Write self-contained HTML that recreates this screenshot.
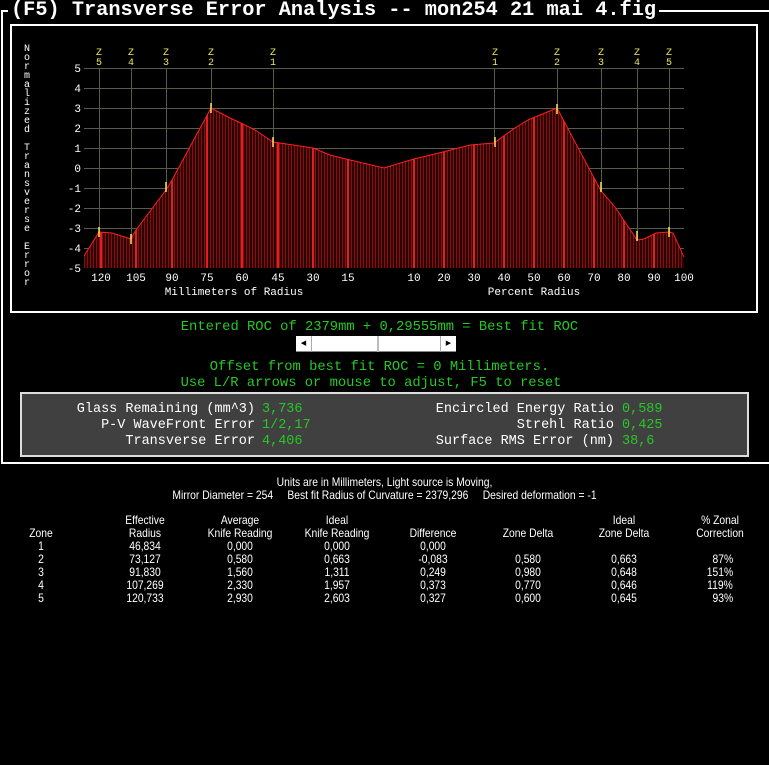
<!DOCTYPE html>
<html><head><meta charset="utf-8"><style>
body{margin:0;background:#000;width:769px;height:765px;overflow:hidden;position:relative;font-family:"Liberation Mono",monospace}
.a{position:absolute;white-space:pre}
.g{color:#25c825;font-size:13.8px}
.t{font-family:"Liberation Sans",sans-serif;font-size:12px;color:#fff;transform:scaleX(0.86);transform-origin:center}
.pl{color:#fff;font-size:13.5px}
.pv{color:#25c825;font-size:13.5px}
</style></head><body>
<div class="a" style="left:1px;top:10px;width:766px;height:452px;border:2px solid #fff;border-top:none"></div>
<div class="a" style="left:1px;top:10px;width:768px;height:2px;background:#fff"></div>
<div class="a" style="left:8px;top:0;background:#000;color:#fff;font-weight:bold;font-size:20.3px;line-height:22px;padding:0 3px">(F5) Transverse Error Analysis -- mon254 21 mai 4.fig</div>
<div class="a" style="left:10px;top:24px;width:744px;height:285px;border:2px solid #fff"></div>
<svg class="a" style="left:0;top:0" width="769" height="320" font-family="Liberation Mono, monospace">
<defs>
<pattern id="p" x="84" y="0" width="3" height="10" patternUnits="userSpaceOnUse">
<rect width="3" height="10" fill="#2a0000"/><rect width="1" height="10" fill="#8a0c0c"/></pattern>
<clipPath id="c"><path d="M84,256 L99,232 L112,233 L131,239 L136,230 L166,190 L172,180 L211,108 L230,118 L245,125 L255,130 L273,142 L300,146 L313,148 L330,155 L350,160 L384,168 L414,159 L443,152 L470,145 L494,143 L505,135 L515,128 L528,120 L540,115 L557,108 L601,191 L615,207 L637,240 L644,239 L656,233 L669,232 L673,233 L684,257 L684,268 L84,268 Z"/></clipPath>
</defs>
<g stroke="#5a5a48" stroke-width="1">
<line x1="84" y1="68.5" x2="684" y2="68.5"/><line x1="84" y1="88.5" x2="684" y2="88.5"/><line x1="84" y1="108.5" x2="684" y2="108.5"/><line x1="84" y1="128.5" x2="684" y2="128.5"/><line x1="84" y1="148.5" x2="684" y2="148.5"/><line x1="84" y1="168.5" x2="684" y2="168.5"/><line x1="84" y1="188.5" x2="684" y2="188.5"/><line x1="84" y1="208.5" x2="684" y2="208.5"/><line x1="84" y1="228.5" x2="684" y2="228.5"/><line x1="84" y1="248.5" x2="684" y2="248.5"/>
<line x1="99.5" y1="68" x2="99.5" y2="268"/><line x1="131.5" y1="68" x2="131.5" y2="268"/><line x1="166.5" y1="68" x2="166.5" y2="268"/><line x1="211.5" y1="68" x2="211.5" y2="268"/><line x1="273.5" y1="68" x2="273.5" y2="268"/>
<line x1="494.5" y1="68" x2="494.5" y2="268"/><line x1="557.5" y1="68" x2="557.5" y2="268"/><line x1="601.5" y1="68" x2="601.5" y2="268"/><line x1="637.5" y1="68" x2="637.5" y2="268"/><line x1="669.5" y1="68" x2="669.5" y2="268"/>
</g>
<g clip-path="url(#c)">
<rect x="84" y="60" width="600" height="208" fill="url(#p)"/>
<g stroke="#e02020" stroke-width="2">
<line x1="101" y1="60" x2="101" y2="268"/><line x1="136" y1="60" x2="136" y2="268"/><line x1="172" y1="60" x2="172" y2="268"/><line x1="207" y1="60" x2="207" y2="268"/><line x1="242" y1="60" x2="242" y2="268"/><line x1="278" y1="60" x2="278" y2="268"/><line x1="313" y1="60" x2="313" y2="268"/><line x1="348" y1="60" x2="348" y2="268"/>
<line x1="414" y1="60" x2="414" y2="268"/><line x1="444" y1="60" x2="444" y2="268"/><line x1="474" y1="60" x2="474" y2="268"/><line x1="504" y1="60" x2="504" y2="268"/><line x1="534" y1="60" x2="534" y2="268"/><line x1="564" y1="60" x2="564" y2="268"/><line x1="594" y1="60" x2="594" y2="268"/><line x1="624" y1="60" x2="624" y2="268"/><line x1="654" y1="60" x2="654" y2="268"/>
</g></g>
<path d="M84,256 L99,232 L112,233 L131,239 L136,230 L166,190 L172,180 L211,108 L230,118 L245,125 L255,130 L273,142 L300,146 L313,148 L330,155 L350,160 L384,168 L414,159 L443,152 L470,145 L494,143 L505,135 L515,128 L528,120 L540,115 L557,108 L601,191 L615,207 L637,240 L644,239 L656,233 L669,232 L673,233 L684,257" fill="none" stroke="#ff2020" stroke-width="1"/>
<g stroke="#ffe060" stroke-width="1.5">
<line x1="99" y1="227" x2="99" y2="237"/><line x1="131" y1="234" x2="131" y2="244"/><line x1="166" y1="182" x2="166" y2="192"/><line x1="211" y1="103" x2="211" y2="113"/><line x1="273" y1="137" x2="273" y2="147"/>
<line x1="495" y1="137" x2="495" y2="147"/><line x1="557" y1="104" x2="557" y2="114"/><line x1="601" y1="182" x2="601" y2="192"/><line x1="637" y1="231" x2="637" y2="241"/><line x1="669" y1="227" x2="669" y2="237"/>
</g>
<g fill="#e8e860" font-size="10" text-anchor="middle">
<text x="99" y="55">Z</text><text x="99" y="65">5</text><text x="131" y="55">Z</text><text x="131" y="65">4</text><text x="166" y="55">Z</text><text x="166" y="65">3</text><text x="211" y="55">Z</text><text x="211" y="65">2</text><text x="273" y="55">Z</text><text x="273" y="65">1</text>
<text x="495" y="55">Z</text><text x="495" y="65">1</text><text x="557" y="55">Z</text><text x="557" y="65">2</text><text x="601" y="55">Z</text><text x="601" y="65">3</text><text x="637" y="55">Z</text><text x="637" y="65">4</text><text x="669" y="55">Z</text><text x="669" y="65">5</text>
</g>
<g fill="#fff" font-size="11" text-anchor="end">
<text x="81" y="72">5</text><text x="81" y="92">4</text><text x="81" y="112">3</text><text x="81" y="132">2</text><text x="81" y="152">1</text><text x="81" y="172">0</text><text x="81" y="192">-1</text><text x="81" y="212">-2</text><text x="81" y="232">-3</text><text x="81" y="252">-4</text><text x="81" y="272">-5</text>
</g>
<g fill="#fff" font-size="11" text-anchor="middle">
<text x="101" y="281">120</text><text x="136" y="281">105</text><text x="172" y="281">90</text><text x="207" y="281">75</text><text x="242" y="281">60</text><text x="278" y="281">45</text><text x="313" y="281">30</text><text x="348" y="281">15</text>
<text x="414" y="281">10</text><text x="444" y="281">20</text><text x="474" y="281">30</text><text x="504" y="281">40</text><text x="534" y="281">50</text><text x="564" y="281">60</text><text x="594" y="281">70</text><text x="624" y="281">80</text><text x="654" y="281">90</text><text x="684" y="281">100</text>
<text x="234" y="295">Millimeters of Radius</text><text x="534" y="295">Percent Radius</text>
</g>
<g fill="#fff" font-size="10" text-anchor="middle">
<text x="27" y="51">N</text><text x="27" y="60">o</text><text x="27" y="69">r</text><text x="27" y="78">m</text><text x="27" y="87">a</text><text x="27" y="96">l</text><text x="27" y="105">i</text><text x="27" y="114">z</text><text x="27" y="123">e</text><text x="27" y="132">d</text>
<text x="27" y="150">T</text><text x="27" y="159">r</text><text x="27" y="168">a</text><text x="27" y="177">n</text><text x="27" y="186">s</text><text x="27" y="195">v</text><text x="27" y="204">e</text><text x="27" y="213">r</text><text x="27" y="222">s</text><text x="27" y="231">e</text>
<text x="27" y="249">E</text><text x="27" y="258">r</text><text x="27" y="267">r</text><text x="27" y="276">o</text><text x="27" y="285">r</text>
</g>
</svg>
<div class="a g" style="left:0;width:759px;text-align:center;top:320px">Entered ROC of 2379mm + 0,29555mm = Best fit ROC</div>
<div class="a" style="left:296px;top:336px;width:160px;height:16px;background:#fff;border-bottom:1px solid #888;box-sizing:border-box"></div>
<div class="a" style="left:296px;top:336px;width:16px;height:16px;border-right:1px solid #aaa;box-sizing:border-box;font-size:7px;line-height:16px;text-align:center;color:#000">◀</div>
<div class="a" style="left:440px;top:336px;width:16px;height:16px;border-left:1px solid #aaa;box-sizing:border-box;font-size:7px;line-height:16px;text-align:center;color:#000">▶</div>
<div class="a" style="left:377px;top:336px;width:2px;height:16px;background:#bbb"></div>
<div class="a g" style="left:0;width:759px;text-align:center;top:360px">Offset from best fit ROC = 0 Millimeters.</div>
<div class="a g" style="left:0;width:742px;text-align:center;top:376px">Use L/R arrows or mouse to adjust, F5 to reset</div>
<div class="a" style="left:20px;top:392px;width:725px;height:61px;background:#404040;border:2px solid #ddd"></div>
<div class="a pl" style="right:514px;top:402px">Glass Remaining (mm^3)</div><div class="a pv" style="left:262px;top:402px">3,736</div>
<div class="a pl" style="right:514px;top:418px">P-V WaveFront Error</div><div class="a pv" style="left:262px;top:418px">1/2,17</div>
<div class="a pl" style="right:514px;top:434px">Transverse Error</div><div class="a pv" style="left:262px;top:434px">4,406</div>
<div class="a pl" style="right:155px;top:402px">Encircled Energy Ratio</div><div class="a pv" style="left:622px;top:402px">0,589</div>
<div class="a pl" style="right:155px;top:418px">Strehl Ratio</div><div class="a pv" style="left:622px;top:418px">0,425</div>
<div class="a pl" style="right:155px;top:434px">Surface RMS Error (nm)</div><div class="a pv" style="left:622px;top:434px">38,6</div>

<div class="a t" style="left:0;width:769px;text-align:center;top:475px">Units are in Millimeters, Light source is Moving,</div>
<div class="a t" style="left:0;width:769px;text-align:center;top:488px">Mirror Diameter = 254     Best fit Radius of Curvature = 2379,296     Desired deformation = -1</div>
<div class="a t" style="left:0;top:514px;width:82px;text-align:center;line-height:13px"><br>Zone<br>1<br>2<br>3<br>4<br>5</div>
<div class="a t" style="left:100px;top:514px;width:90px;text-align:center;line-height:13px">Effective<br>Radius<br>46,834<br>73,127<br>91,830<br>107,269<br>120,733</div>
<div class="a t" style="left:190px;top:514px;width:100px;text-align:center;line-height:13px">Average<br>Knife Reading<br>0,000<br>0,580<br>1,560<br>2,330<br>2,930</div>
<div class="a t" style="left:287px;top:514px;width:100px;text-align:center;line-height:13px">Ideal<br>Knife Reading<br>0,000<br>0,663<br>1,311<br>1,957<br>2,603</div>
<div class="a t" style="left:383px;top:514px;width:100px;text-align:center;line-height:13px"><br>Difference<br>0,000<br>-0,083<br>0,249<br>0,373<br>0,327</div>
<div class="a t" style="left:478px;top:514px;width:100px;text-align:center;line-height:13px"><br>Zone Delta<br><br>0,580<br>0,980<br>0,770<br>0,600</div>
<div class="a t" style="left:574px;top:514px;width:100px;text-align:center;line-height:13px">Ideal<br>Zone Delta<br><br>0,663<br>0,648<br>0,646<br>0,645</div>
<div class="a t" style="left:670px;top:514px;width:100px;text-align:center;line-height:13px">% Zonal<br>Correction<br><br>&nbsp; 87%<br>151%<br>119%<br>&nbsp; 93%</div>
</body></html>
